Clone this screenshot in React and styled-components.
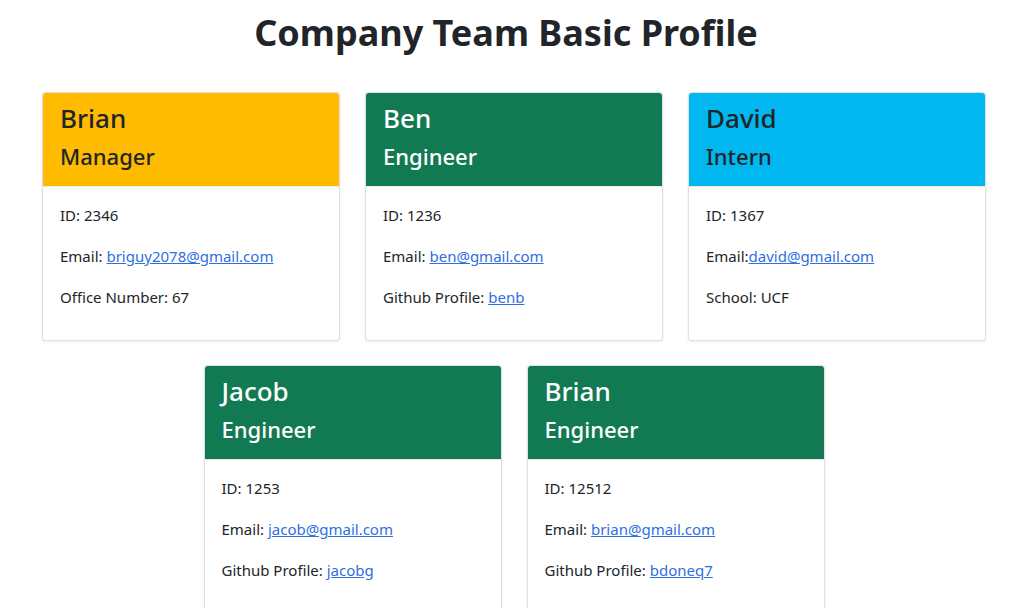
import React from 'react'
import styled, { createGlobalStyle } from 'styled-components'

const GlobalStyle = createGlobalStyle`
    body {
        margin: 0;
        background: #ffffff;
        color: #212529;
        font-family: "Noto Sans", "Open Sans", sans-serif;
    }
`

const Page = styled.div`
    display: flex;
    flex-direction: column;
    align-items: center;
    padding-top: 9px;
`

const Title = styled.h1`
    margin: 0 0 35px 0;
    padding-right: 13px;
    font-size: 36px;
    line-height: 48px;
    font-weight: 700;
    color: #212529;
`

const Grid = styled.div`
    display: flex;
    flex-wrap: wrap;
    justify-content: center;
    gap: 24px 25px;
    width: 944px;
    padding-left: 3px;
`

const Card = styled.div`
    width: 298px;
    box-sizing: border-box;
    background: #fff;
    border: 1px solid rgba(0, 0, 0, 0.12);
    border-radius: 4px;
    box-shadow: 0 1px 3px rgba(0, 0, 0, 0.08);
    overflow: hidden;
`

const CardHeader = styled.div`
    padding: 8px 17px;
    background: ${p => p.$bg};
    color: ${p => p.$fg};
`

const Name = styled.h3`
    margin: 0 0 7px 0;
    font-size: 26px;
    line-height: 34px;
    font-weight: 500;
`

const Role = styled.h4`
    margin: 0 0 7px 0;
    font-size: 22px;
    line-height: 29px;
    font-weight: 500;
`

const CardBody = styled.div`
    padding: 16px 17px;
    border-top: 1px solid rgba(0, 0, 0, 0.08);
`

const Line = styled.p`
    margin: 0 0 17px 0;
    font-size: 15px;
    line-height: 24px;
    &:last-child {
        margin-bottom: 15px;
    }
`

const Link = styled.a`
    color: #2f6fe0;
    text-decoration: underline;
`

const colors = {
    Manager: { bg: '#ffbb00', fg: '#212529' },
    Engineer: { bg: '#127a53', fg: '#ffffff' },
    Intern: { bg: '#00b7ef', fg: '#212529' },
}

const team = [
    { name: 'Brian', role: 'Manager', id: '2346', email: 'briguy2078@gmail.com', extra: ['Office Number: ', '67'] },
    { name: 'Ben', role: 'Engineer', id: '1236', email: 'ben@gmail.com', extra: ['Github Profile: ', 'benb', true] },
    { name: 'David', role: 'Intern', id: '1367', email: 'david@gmail.com', noSpace: true, extra: ['School: ', 'UCF'] },
    { name: 'Jacob', role: 'Engineer', id: '1253', email: 'jacob@gmail.com', extra: ['Github Profile: ', 'jacobg', true] },
    { name: 'Brian', role: 'Engineer', id: '12512', email: 'brian@gmail.com', extra: ['Github Profile: ', 'bdoneq7', true] },
]

function MemberCard({ m }) {
    const c = colors[m.role]
    return (
        <Card>
            <CardHeader $bg={c.bg} $fg={c.fg}>
                <Name>{m.name}</Name>
                <Role>{m.role}</Role>
            </CardHeader>
            <CardBody>
                <Line>ID: {m.id}</Line>
                <Line>
                    {m.noSpace ? 'Email:' : 'Email: '}
                    <Link href={'mailto:' + m.email}>{m.email}</Link>
                </Line>
                <Line>
                    {m.extra[0]}
                    {m.extra[2] ? <Link href="#">{m.extra[1]}</Link> : m.extra[1]}
                </Line>
            </CardBody>
        </Card>
    )
}

function App() {
    return (
        <>
            <GlobalStyle />
            <Page>
                <Title>Company Team Basic Profile</Title>
                <Grid>
                    {team.map((m, i) => <MemberCard key={i} m={m} />)}
                </Grid>
            </Page>
        </>
    )
}

export default App
